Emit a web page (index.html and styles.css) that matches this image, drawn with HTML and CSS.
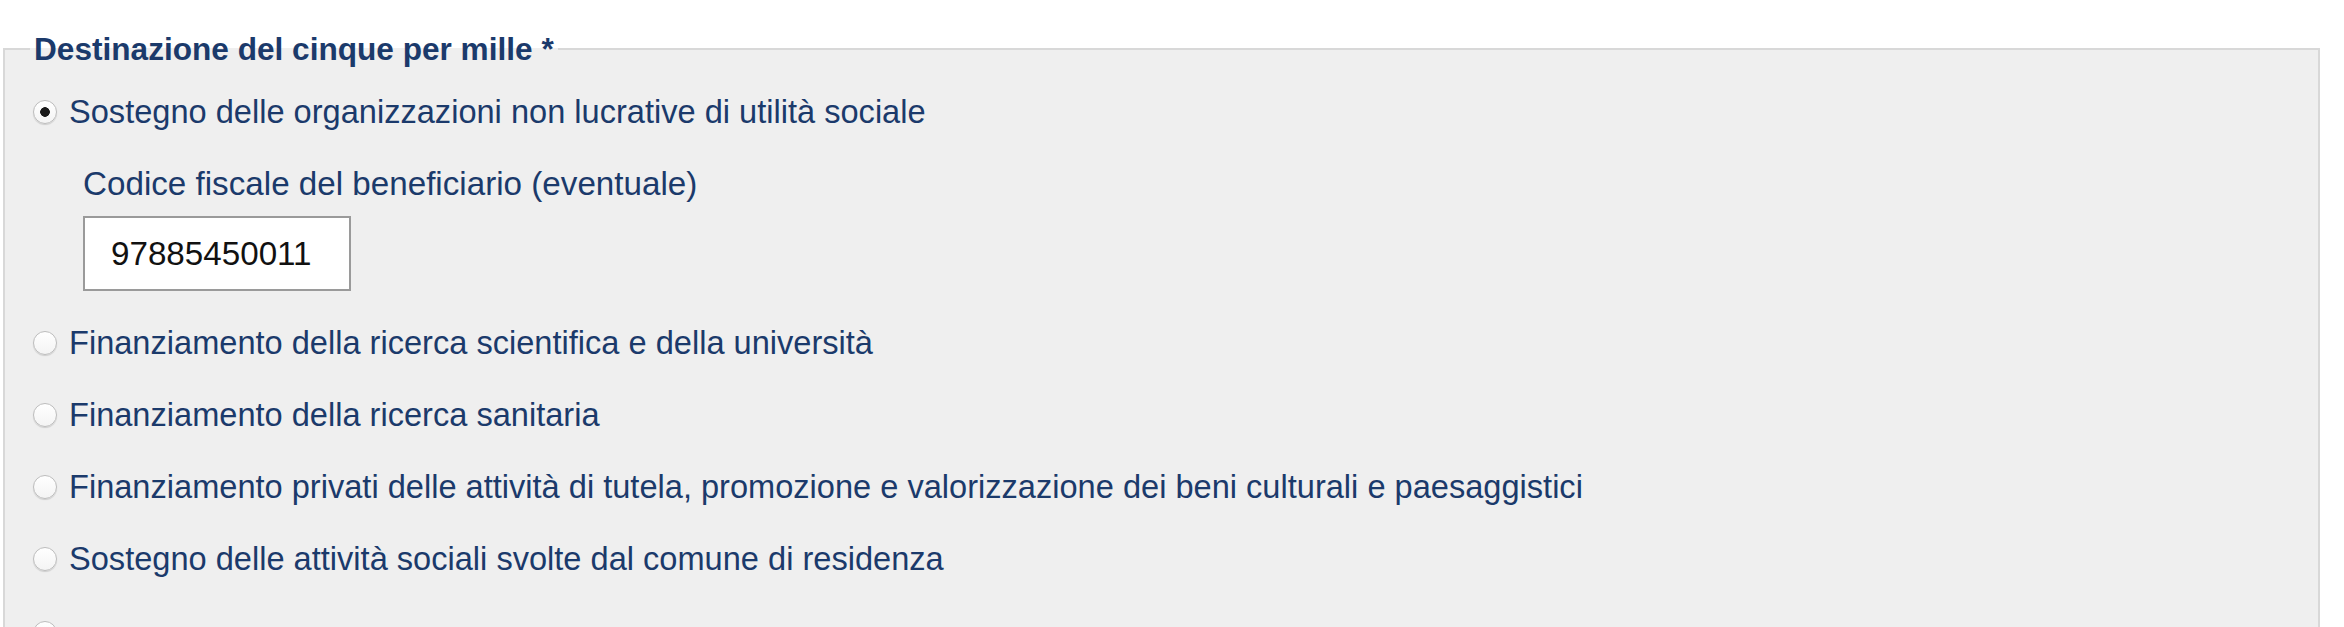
FILE: index.html
```html
<!DOCTYPE html>
<html lang="it">
<head>
<meta charset="utf-8">
<title>Destinazione del cinque per mille</title>
<link rel="stylesheet" href="styles.css">
</head>
<body>
<form class="form">
  <fieldset class="group">
    <legend class="group-title">Destinazione del cinque per mille *</legend>
    <div class="options">
      <label class="option">
        <input class="radio" type="radio" name="dest" checked>
        <span class="option-text">Sostegno delle organizzazioni non lucrative di utilità sociale</span>
      </label>
      <div class="sub">
        <label class="sub-label" for="cf">Codice fiscale del beneficiario (eventuale)</label>
        <input class="text-input" id="cf" type="text" value="97885450011">
      </div>
      <label class="option">
        <input class="radio" type="radio" name="dest">
        <span class="option-text">Finanziamento della ricerca scientifica e della università</span>
      </label>
      <label class="option">
        <input class="radio" type="radio" name="dest">
        <span class="option-text">Finanziamento della ricerca sanitaria</span>
      </label>
      <label class="option">
        <input class="radio" type="radio" name="dest">
        <span class="option-text">Finanziamento privati delle attività di tutela, promozione e valorizzazione dei beni culturali e paesaggistici</span>
      </label>
      <label class="option">
        <input class="radio" type="radio" name="dest">
        <span class="option-text">Sostegno delle attività sociali svolte dal comune di residenza</span>
      </label>
      <label class="option option-last">
        <input class="radio" type="radio" name="dest">
      </label>
    </div>
  </fieldset>
</form>
</body>
</html>
```

FILE: styles.css
```css
html, body {
  margin: 0;
  padding: 0;
  background: #ffffff;
}

body {
  font-family: "Liberation Sans", Arial, sans-serif;
  font-size: 32.6px;
  color: #1b3a6b;
}

.form {
  margin: 0;
}

.group {
  box-sizing: border-box;
  width: 2317px;
  margin: 34px 0 0 3px;
  padding: 28px 0 40px 28px;
  border: 2px solid #d8d8d8;
  background: #efefef;
  min-width: 0;
}

.group-title {
  padding: 0 4px;
  margin-left: -3px;
  font-size: 31.6px;
  font-weight: bold;
  line-height: 30px;
  color: #1b3a6b;
}

.options {
  display: flex;
  flex-direction: column;
  gap: 32px;
}

.option {
  display: flex;
  align-items: center;
  gap: 12px;
  height: 40px;
  line-height: 40px;
  white-space: nowrap;
}

.option-last {
  margin-top: 2px;
}

.radio {
  appearance: none;
  -webkit-appearance: none;
  box-sizing: border-box;
  width: 24px;
  height: 24px;
  margin: 0;
  border: 1px solid #bdbdbd;
  border-radius: 50%;
  background: linear-gradient(#ffffff, #f4f4f4);
  box-shadow: 0 1px 1px rgba(0, 0, 0, 0.14);
  flex: none;
}

.radio:checked {
  background: radial-gradient(circle, #1a1a1a 0 4.5px, transparent 5.1px), linear-gradient(#ffffff, #f4f4f4);
}

.sub {
  display: flex;
  flex-direction: column;
  align-items: flex-start;
  padding-left: 50px;
}

.sub-label {
  font-size: 33.2px;
  line-height: 40px;
  height: 40px;
  margin-bottom: 12px;
}

.text-input {
  box-sizing: border-box;
  width: 268px;
  height: 75px;
  padding: 0 0 0 26px;
  border: 2px solid #9a9a9a;
  background: #ffffff;
  font-family: "Liberation Sans", Arial, sans-serif;
  font-size: 33.2px;
  color: #111111;
  outline: none;
}
```
